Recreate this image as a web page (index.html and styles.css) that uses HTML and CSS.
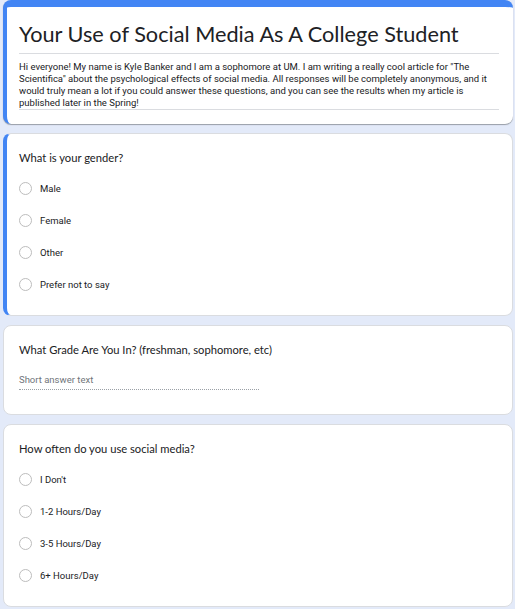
FILE: index.html
```html
<!DOCTYPE html>
<html lang="en">
<head>
<meta charset="utf-8">
<title>Your Use of Social Media As A College Student</title>
<link rel="stylesheet" href="styles.css">
</head>
<body>
<main class="form">
  <section class="card header-card">
    <h1 class="title">Your Use of Social Media As A College Student</h1>
    <p class="desc">Hi everyone! My name is Kyle Banker and I am a sophomore at UM. I am writing a really cool article for "The Scientifica" about the psychological effects of social media. All responses will be completely anonymous, and it would truly mean a lot if you could answer these questions, and you can see the results when my article is published later in the Spring!</p>
  </section>

  <section class="card question active">
    <h2 class="q-title">What is your gender?</h2>
    <ul class="options">
      <li class="option"><span class="radio"></span><span class="label">Male</span></li>
      <li class="option"><span class="radio"></span><span class="label">Female</span></li>
      <li class="option"><span class="radio"></span><span class="label">Other</span></li>
      <li class="option"><span class="radio"></span><span class="label">Prefer not to say</span></li>
    </ul>
  </section>

  <section class="card question short">
    <h2 class="q-title">What Grade Are You In? (freshman, sophomore, etc)</h2>
    <div class="short-answer">Short answer text</div>
  </section>

  <section class="card question">
    <h2 class="q-title">How often do you use social media?</h2>
    <ul class="options">
      <li class="option"><span class="radio"></span><span class="label">I Don't</span></li>
      <li class="option"><span class="radio"></span><span class="label">1-2 Hours/Day</span></li>
      <li class="option"><span class="radio"></span><span class="label">3-5 Hours/Day</span></li>
      <li class="option"><span class="radio"></span><span class="label">6+ Hours/Day</span></li>
    </ul>
  </section>
</main>
</body>
</html>
```
FILE: styles.css
```css
html, body {
  margin: 0;
  padding: 0;
  background: #e3eaf9;
}
body {
  font-family: Roboto, "Liberation Sans", Arial, sans-serif;
  color: #202124;
}
.form {
  display: flex;
  flex-direction: column;
  gap: 9px;
  padding: 0 2px 0 3px;
}
.card {
  background: #fff;
  border-radius: 8px;
  border: 1px solid #dadce0;
}
.header-card {
  border: none;
  border-top: 7px solid #4285f4;
  border-left: 4px solid #4285f4;
  box-shadow: 0 1px 1px rgba(60, 64, 67, 0.45);
  padding: 13px 14px 14px 12px;
}
.title {
  margin: 0;
  font-family: Lato, "Open Sans", Roboto, sans-serif;
  font-weight: 400;
  font-size: 21.7px;
  line-height: 28px;
  padding-bottom: 5px;
  border-bottom: 1px solid #dadce0;
  color: #202124;
}
.desc {
  margin: 0;
  padding: 7px 0 0;
  font-size: 9.5px;
  line-height: 12px;
  color: #202124;
  border-bottom: 1px solid #dadce0;
}
.question {
  padding: 16px 16px 15px 15px;
}
.question.active {
  border-left: 4px solid #4285f4;
  padding-left: 12px;
}
.q-title {
  margin: 0;
  font-family: Lato, "Open Sans", Roboto, sans-serif;
  font-weight: 400;
  font-size: 11.2px;
  line-height: 16px;
  color: #202124;
}
.options {
  list-style: none;
  margin: 0;
  padding: 6px 0 0;
}
.option {
  display: flex;
  align-items: center;
  gap: 8px;
  height: 32px;
}
.radio {
  width: 11px;
  height: 11px;
  border: 1.5px solid #bdbdbd;
  border-radius: 50%;
  flex: none;
}
.label {
  font-size: 9.5px;
  color: #202124;
}
.short-answer {
  margin-top: 16px;
  width: 240px;
  font-size: 9.5px;
  color: #70757a;
  padding-bottom: 4px;
  border-bottom: 1px dotted #9aa0a6;
}
.question.short {
  padding-bottom: 24px;
}
```
